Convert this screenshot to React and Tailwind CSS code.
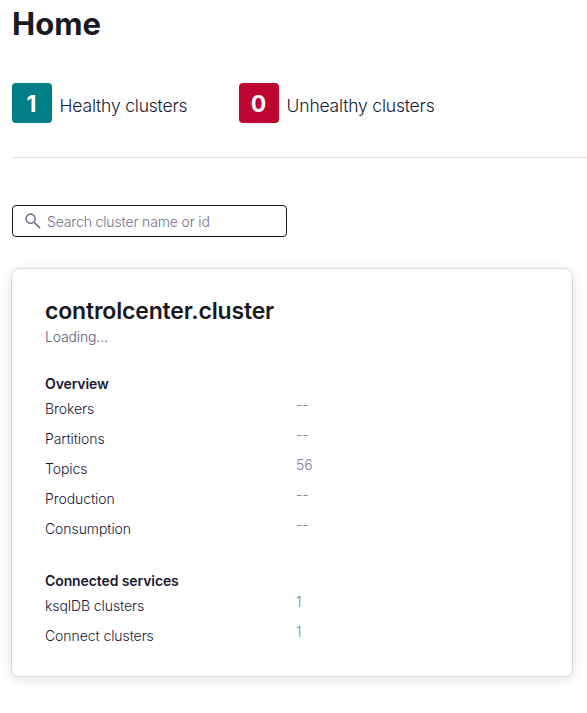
const overview = [
  ["Brokers", "--"],
  ["Partitions", "--"],
  ["Topics", "56"],
  ["Production", "--"],
  ["Consumption", "--"],
];
const services = [
  ["ksqlDB clusters", "1"],
  ["Connect clusters", "1"],
];

function Stat({ count, label, color }) {
  return (
    <div className="flex w-[227px] items-center gap-2">
      <div className={`flex h-10 w-10 items-center justify-center rounded-[4px] pt-0.5 pr-px text-[23px] font-bold text-white ${color}`}>{count}</div>
      <span className="-ml-[0.4px] pt-[7px] text-[17.5px] font-light tracking-[-0.2px] whitespace-nowrap">{label}</span>
    </div>
  );
}

function Section({ title, rows }) {
  return (
    <section>
      <h3 className="text-sm leading-5 font-semibold tracking-[-0.1px]">{title}</h3>
      {rows.map(([label, value]) => (
        <div key={label} className="flex h-[30px] text-sm leading-[30px] font-light tracking-[-0.08px]">
          <span className="w-[251px]">{label}</span>
          <span className="-mt-1 tracking-normal text-[#82809b]">{value}</span>
        </div>
      ))}
    </section>
  );
}

export default function App() {
  return (
    <main className="h-[713px] w-[587px] overflow-hidden bg-white pl-3 font-['Inter',sans-serif] text-[#191933]">
      <h1 className="h-[83px] pt-1 text-[31px] leading-10 font-bold text-[#191924]">Home</h1>
      <div className="flex h-[75px] items-start border-b border-[#dedede]">
        <Stat count="1" label="Healthy clusters" color="bg-[#007f86]" />
        <Stat count="0" label="Unhealthy clusters" color="bg-[#be0430]" />
      </div>
      <div className="mt-[47px] flex h-8 w-[275px] items-center rounded-[4px] border border-[#191924] pl-3 text-[#74718e]">
        <svg className="h-4 w-4" viewBox="0 0 16 16" fill="none" stroke="currentColor" strokeWidth="1.6">
          <circle cx="5.6" cy="5.7" r="4.6" />
          <path d="m9 9.1 6 6" />
        </svg>
        <span className="pt-0.5 pl-1.5 text-sm font-light tracking-[-0.15px]">Search cluster name or id</span>
      </div>
      <article className="mt-[31px] -ml-px h-[409px] w-[562px] rounded-lg border border-[#dadada] px-[33px] pt-7 shadow-[0_2px_12px_rgba(0,0,0,0.12)]">
        <h2 className="text-[23px] leading-7 font-semibold tracking-[-0.17px] text-[#191924]">controlcenter.cluster</h2>
        <p className="mt-0.5 text-sm leading-5 font-light tracking-[-0.15px] text-[#5c5973]">Loading...</p>
        <div className="mt-[27px] flex flex-col gap-[27px]">
          <Section title="Overview" rows={overview} />
          <Section title="Connected services" rows={services} />
        </div>
      </article>
    </main>
  );
}
